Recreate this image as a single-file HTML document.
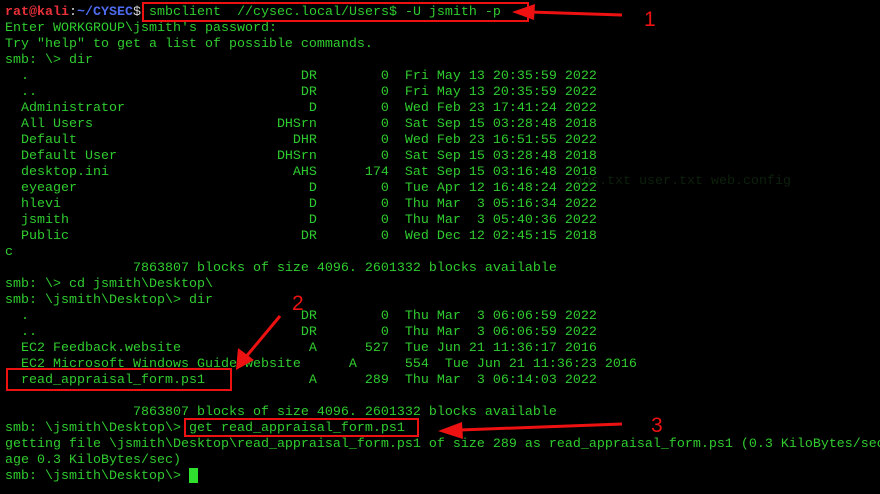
<!DOCTYPE html>
<html><head><meta charset="utf-8"><style>
html,body{margin:0;padding:0;background:#000;width:880px;height:494px;overflow:hidden;position:relative}
pre{position:absolute;left:5px;top:5px;width:875px;height:489px;overflow:hidden;margin:0;font-family:"Liberation Mono","DejaVu Sans Mono",monospace;font-size:13.33px;line-height:16px;color:#2fcc2f;white-space:pre}
.r{color:#e8303a;font-weight:bold}.b{color:#4f6cf0;font-weight:bold}.w{color:#d8d8d8}
.box{position:absolute;border:2px solid #ee1111;box-sizing:border-box}
.cur{position:absolute;left:189px;top:468px;width:9px;height:15px;background:#2fe02f}
.faint{position:absolute;left:575px;top:174px;font-family:"Liberation Mono",monospace;font-size:13.33px;color:#0c200c}
svg{position:absolute;left:0;top:0}
</style></head><body>
<div class="faint">ags.txt  user.txt  web.config</div>
<pre><span class="r">rat@kali</span><span class="w">:</span><span class="b">~/CYSEC</span><span class="w">$</span> smbclient  //cysec.local/Users$ -U jsmith -p
Enter WORKGROUP\jsmith's password:
Try "help" to get a list of possible commands.
smb: \&gt; dir
  .                                  DR        0  Fri May 13 20:35:59 2022
  ..                                 DR        0  Fri May 13 20:35:59 2022
  Administrator                       D        0  Wed Feb 23 17:41:24 2022
  All Users                       DHSrn        0  Sat Sep 15 03:28:48 2018
  Default                           DHR        0  Wed Feb 23 16:51:55 2022
  Default User                    DHSrn        0  Sat Sep 15 03:28:48 2018
  desktop.ini                       AHS      174  Sat Sep 15 03:16:48 2018
  eyeager                             D        0  Tue Apr 12 16:48:24 2022
  hlevi                               D        0  Thu Mar  3 05:16:34 2022
  jsmith                              D        0  Thu Mar  3 05:40:36 2022
  Public                             DR        0  Wed Dec 12 02:45:15 2018
c
                7863807 blocks of size 4096. 2601332 blocks available
smb: \&gt; cd jsmith\Desktop\
smb: \jsmith\Desktop\&gt; dir
  .                                  DR        0  Thu Mar  3 06:06:59 2022
  ..                                 DR        0  Thu Mar  3 06:06:59 2022
  EC2 Feedback.website                A      527  Tue Jun 21 11:36:17 2016
  EC2 Microsoft Windows Guide.website      A      554  Tue Jun 21 11:36:23 2016
  read_appraisal_form.ps1             A      289  Thu Mar  3 06:14:03 2022

                7863807 blocks of size 4096. 2601332 blocks available
smb: \jsmith\Desktop\&gt; get read_appraisal_form.ps1
getting file \jsmith\Desktop\read_appraisal_form.ps1 of size 289 as read_appraisal_form.ps1 (0.3 KiloBytes/sec) (aver
age 0.3 KiloBytes/sec)
smb: \jsmith\Desktop\&gt; </pre>
<div class="cur"></div>
<div class="box" style="left:142px;top:2px;width:387px;height:20px"></div>
<div class="box" style="left:6px;top:368px;width:226px;height:23px"></div>
<div class="box" style="left:184px;top:418px;width:235px;height:19px"></div>
<svg width="880" height="494">
<g stroke="#ee1111" stroke-width="3" fill="#ee1111">
<line x1="622" y1="15" x2="530" y2="12"/>
<polygon points="512,12 535,4 534,20" stroke="none"/>
<line x1="280" y1="316" x2="245" y2="358"/>
<polygon points="236,370 238,348 254,360" stroke="none"/>
<line x1="622" y1="424" x2="460" y2="430"/>
<polygon points="438,431 462,422 463,439" stroke="none"/>
</g>
<g fill="#ee1111" font-family="Liberation Sans, sans-serif" font-size="21">
<text x="644" y="26">1</text>
<text x="292" y="310">2</text>
<text x="651" y="432">3</text>
</g>
</svg>
</body></html>
